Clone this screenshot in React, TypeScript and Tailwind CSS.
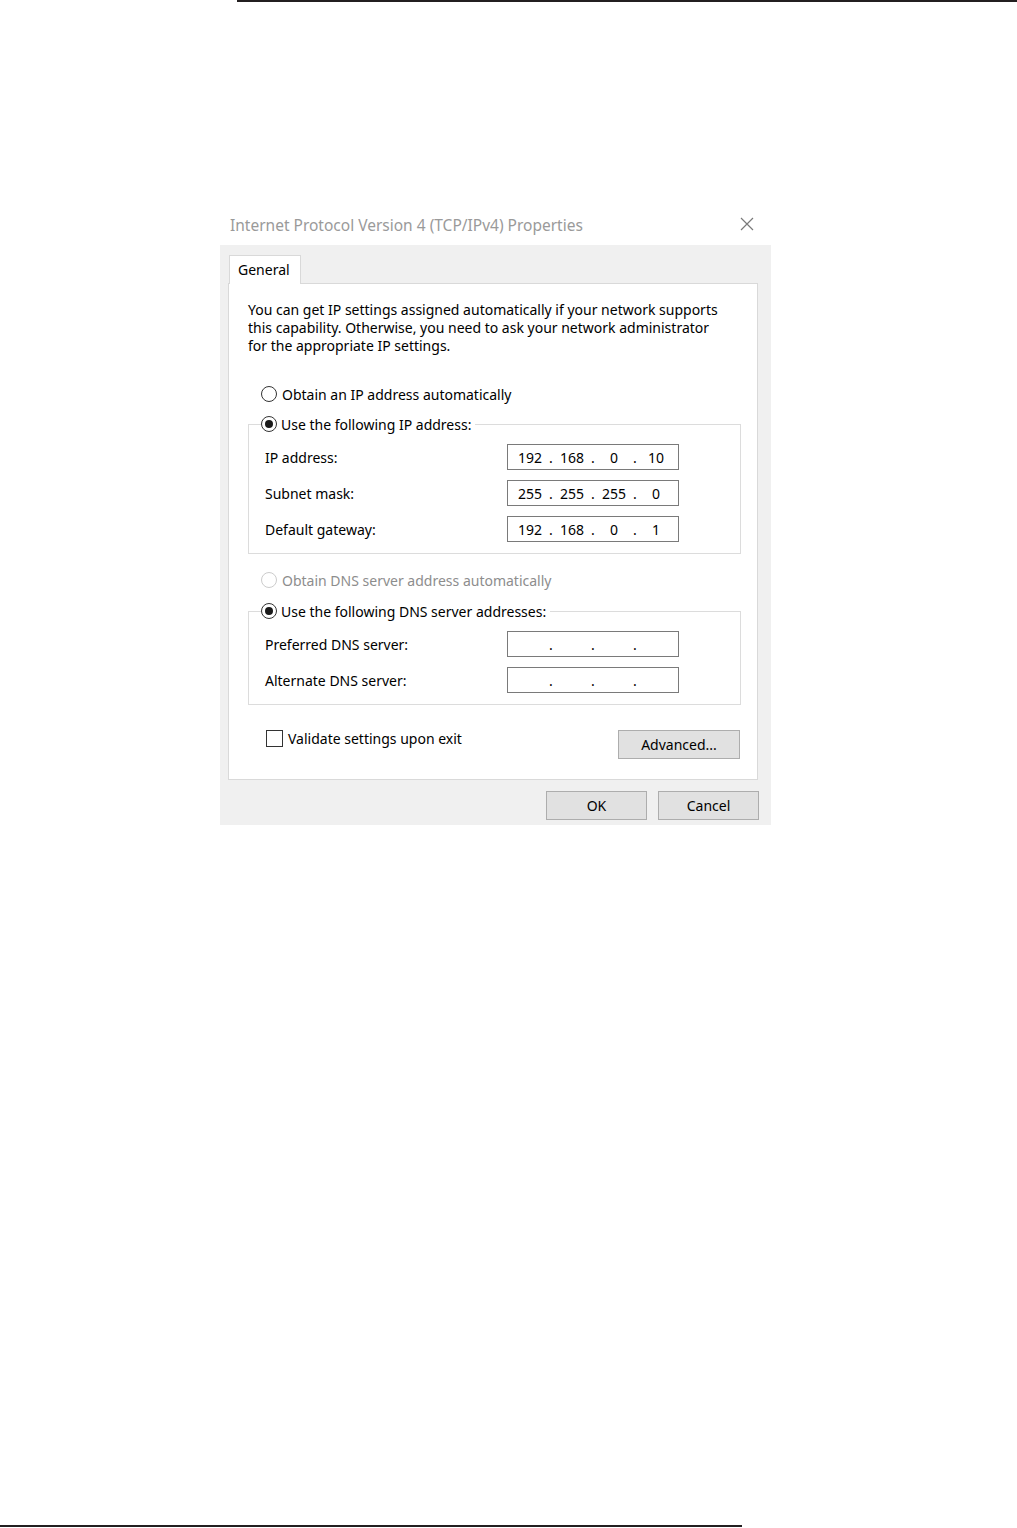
const font = { fontFamily: '"Noto Sans", "Liberation Sans", sans-serif' };

function Radio({ checked, disabled }: { checked?: boolean; disabled?: boolean }) {
  return (
    <span
      className={`flex h-[16px] w-[16px] shrink-0 items-center justify-center rounded-full border bg-white ${
        disabled ? 'border-[#cccccc]' : 'border-[#333333]'
      }`}
    >
      {checked && <span className="h-[8px] w-[8px] rounded-full bg-[#1a1a1a]" />}
    </span>
  );
}

function IpBox({ value }: { value?: string[] }) {
  const parts = value ?? ['', '', '', ''];
  return (
    <div className="flex h-[26px] w-[172px] items-center border border-[#7a7a7a] bg-white pl-[4px] text-[14px] text-black">
      {parts.map((p, i) => (
        <div key={i} className="flex items-center">
          <span className="w-[36px] text-center">{p}</span>
          {i < 3 && <span className="w-[6px] text-center">.</span>}
        </div>
      ))}
    </div>
  );
}

function Row({ label, value }: { label: string; value?: string[] }) {
  return (
    <div className="flex items-center">
      <span className="w-[242px] text-[14px] text-black">{label}</span>
      <IpBox value={value} />
    </div>
  );
}

export default function App() {
  return (
    <div className="flex h-[1528px] w-[1017px] flex-col bg-white" style={font}>
      <div className="ml-[237px] h-[2px] bg-[#231f20]" />

      <div className="ml-[220px] mt-[203px] w-[551px]">
        <div className="flex h-[40px] items-center justify-between pl-[10px] pr-[17px]">
          <span className="mt-[2px] text-[15.5px] text-[#9a9a9a]">Internet Protocol Version 4 (TCP/IPv4) Properties</span>
          <svg width="14" height="14" viewBox="0 0 14 14" className="mb-[3px]">
            <path d="M1 1 L13 13 M13 1 L1 13" stroke="#7a7a7a" strokeWidth="1.2" fill="none" />
          </svg>
        </div>

        <div className="bg-[#f0f0f0] pb-[5px] pl-[8px] pr-[13px] pt-[10px]">
          <div className="relative z-10 -mb-px ml-[1px] flex h-[29px] w-[72px] items-center border border-b-0 border-[#d9d9d9] bg-white pb-[2px] pl-[8px] text-[14px] text-black">
            General
          </div>

          <div className="flex h-[497px] flex-col border border-[#d9d9d9] bg-white pl-[19px] pr-[16px] pt-[17px]">
            <p className="text-[14px] leading-[18px] text-black">
              You can get IP settings assigned automatically if your network supports
              <br />
              this capability. Otherwise, you need to ask your network administrator
              <br />
              for the appropriate IP settings.
            </p>

            <div className="ml-[13px] mt-[30px] flex h-[18px] items-center gap-[5px] text-[14px] text-black">
              <Radio />
              <span>Obtain an IP address automatically</span>
            </div>

            <fieldset className="mt-[12px] border border-[#dcdcdc] px-[16px] pb-[11px]">
              <legend className="-ml-[4px] flex h-[18px] items-center gap-[4px] pr-[4px] text-[14px] text-black">
                <Radio checked />
                <span>Use the following IP address:</span>
              </legend>
              <div className="mt-[11px] flex flex-col gap-[10px]">
                <Row label="IP address:" value={['192', '168', '0', '10']} />
                <Row label="Subnet mask:" value={['255', '255', '255', '0']} />
                <Row label="Default gateway:" value={['192', '168', '0', '1']} />
              </div>
            </fieldset>

            <div className="ml-[13px] mt-[17px] flex h-[18px] items-center gap-[5px] text-[14px] text-[#8d8d8d]">
              <Radio disabled />
              <span>Obtain DNS server address automatically</span>
            </div>

            <fieldset className="mt-[13px] border border-[#dcdcdc] px-[16px] pb-[11px]">
              <legend className="-ml-[4px] flex h-[18px] items-center gap-[4px] pr-[4px] text-[14px] text-black">
                <Radio checked />
                <span>Use the following DNS server addresses:</span>
              </legend>
              <div className="mt-[11px] flex flex-col gap-[10px]">
                <Row label="Preferred DNS server:" />
                <Row label="Alternate DNS server:" />
              </div>
            </fieldset>

            <div className="mt-[24px] flex items-start justify-between pl-[18px] pr-[1px]">
              <div className="flex h-[18px] items-center gap-[5px] text-[14px] text-black">
                <span className="h-[17px] w-[17px] border border-[#333333] bg-white" />
                <span>Validate settings upon exit</span>
              </div>
              <button className="mt-[1px] h-[29px] w-[122px] border border-[#adadad] bg-[#e1e1e1] text-[14px] text-black">
                Advanced...
              </button>
            </div>
          </div>

          <div className="mt-[11px] flex justify-end gap-[11px]">
            <button className="h-[29px] w-[101px] border border-[#adadad] bg-[#e1e1e1] text-[14px] text-black">
              OK
            </button>
            <button className="-mr-px h-[29px] w-[101px] border border-[#adadad] bg-[#e1e1e1] text-[14px] text-black">
              Cancel
            </button>
          </div>
        </div>
      </div>

      <div className="mb-[1px] mt-auto h-[2px] w-[742px] bg-[#231f20]" />
    </div>
  );
}
